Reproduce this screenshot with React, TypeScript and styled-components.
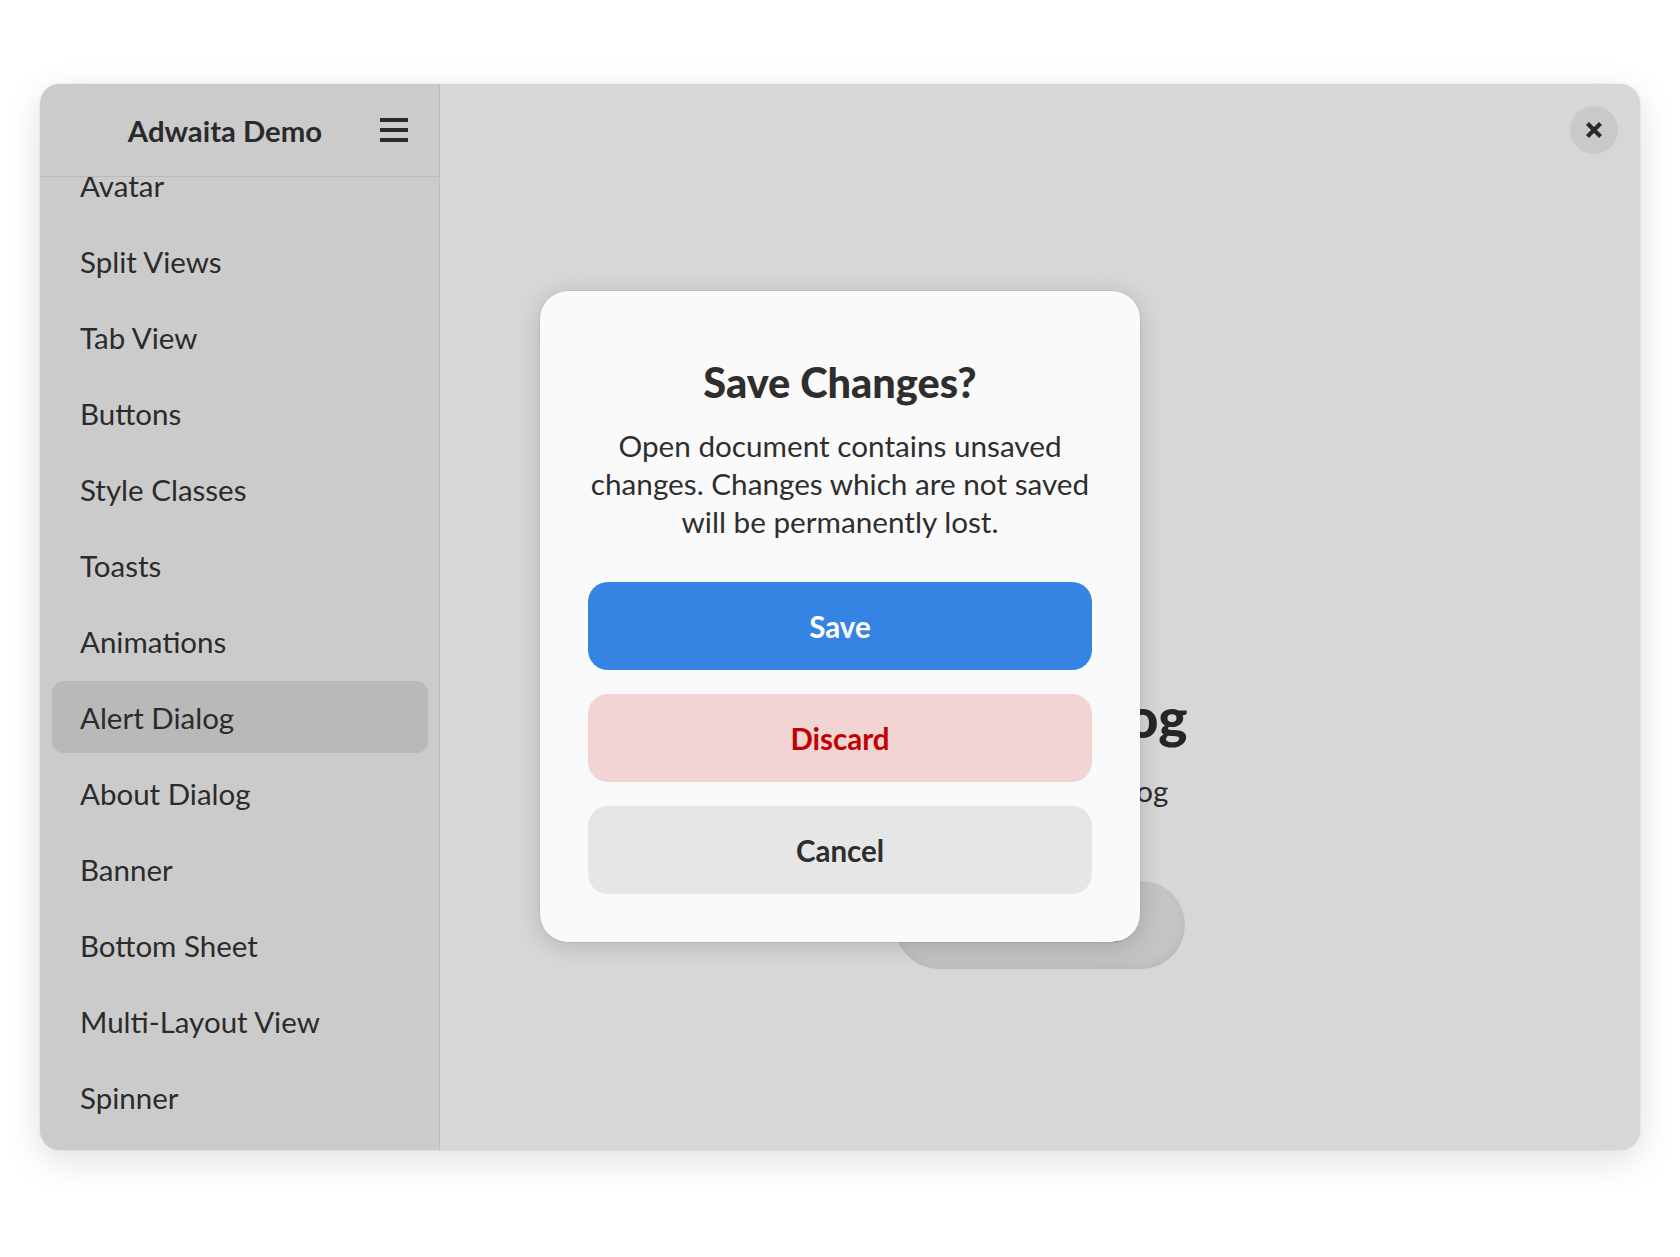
import React, { useLayoutEffect, useRef } from "react";
import styled, { createGlobalStyle } from "styled-components";

const Global = createGlobalStyle`
  html, body { margin: 0; padding: 0; background: #ffffff; }
  body { font-family: Lato, "Noto Sans", sans-serif; color: #2b2b2b; }
  * { box-sizing: border-box; }
`;

const Stage = styled.div`
  width: 1680px;
  height: 1257px;
  padding: 84px 40px 107px 40px;
`;

const Window = styled.div`
  position: relative;
  width: 1600px;
  height: 1066px;
  border-radius: 20px;
  overflow: hidden;
  display: flex;
  background: #d7d7d7;
  box-shadow: 0 10px 36px rgba(0, 0, 0, 0.13), 0 0 0 1px rgba(0, 0, 0, 0.04);
`;

const Sidebar = styled.aside`
  width: 400px;
  flex: none;
  display: flex;
  flex-direction: column;
  background: #cbcbcb;
  border-right: 1px solid #bdbdbd;
`;

const SideHeader = styled.header`
  height: 93px;
  flex: none;
  display: flex;
  align-items: center;
  padding: 0 21px 0 40px;
  border-bottom: 1px solid #bababa;
`;

const HeaderTitle = styled.h1`
  flex: 1;
  margin: 0;
  text-align: center;
  font-size: 29.3px;
  font-weight: 700;
  color: #2a2a2a;
`;

const MenuButton = styled.div`
  width: 48px;
  height: 48px;
  display: flex;
  flex-direction: column;
  align-items: center;
  justify-content: center;
  gap: 6px;
`;

const MenuBar = styled.span`
  display: block;
  width: 28px;
  height: 4px;
  background: #2a2a2a;
`;

const ListScroller = styled.div`
  flex: 1;
  overflow: hidden;
`;

const List = styled.nav`
  display: flex;
  flex-direction: column;
  gap: 4px;
  padding: 12px 11px 60px 12px;
`;

const Row = styled.div<{ $selected?: boolean }>`
  height: 72px;
  flex: none;
  display: flex;
  align-items: center;
  padding-left: 28px;
  border-radius: 12px;
  font-size: 29.5px;
  color: #2b2b2b;
  background: ${(p) => (p.$selected ? "#b9b9b9" : "transparent")};
`;

const Main = styled.main`
  flex: 1;
  display: flex;
  flex-direction: column;
`;

const MainHeader = styled.header`
  height: 92px;
  flex: none;
  display: flex;
  align-items: center;
  justify-content: flex-end;
  padding: 0 22px;
`;

const CloseButton = styled.div`
  width: 48px;
  height: 48px;
  border-radius: 50%;
  background: #c9c9c9;
  display: flex;
  align-items: center;
  justify-content: center;
`;

const StatusPage = styled.section`
  display: flex;
  flex-direction: column;
  align-items: center;
  padding-top: 343px;
`;

const StatusIcon = styled.div`
  width: 128px;
  height: 128px;
  margin-bottom: 36px;
  display: flex;
  align-items: center;
  justify-content: center;
`;

const StatusTitle = styled.h2`
  margin: 0;
  height: 68px;
  line-height: 68px;
  font-size: 55px;
  font-weight: 900;
  color: #262626;
`;

const StatusDesc = styled.p`
  margin: 21px 0 0;
  line-height: 38px;
  font-size: 29.5px;
  color: #2b2b2b;
`;

const PillButton = styled.div`
  margin-top: 71px;
  width: 290px;
  height: 88px;
  border-radius: 44px;
  background: #c4c4c4;
  box-shadow: inset 0 -4px 10px rgba(0, 0, 0, 0.05);
  display: flex;
  align-items: center;
  justify-content: center;
  font-size: 29.5px;
  font-weight: 700;
  color: #2b2b2b;
`;

const Dialog = styled.div`
  position: absolute;
  left: 500px;
  top: 207px;
  width: 600px;
  height: 651px;
  border-radius: 28px;
  background: #fafafa;
  box-shadow: 0 4px 24px rgba(0, 0, 0, 0.16), 0 0 0 1px rgba(0, 0, 0, 0.05);
  display: flex;
  flex-direction: column;
  align-items: stretch;
  padding: 66px 48px 48px;
`;

const DialogTitle = styled.h3`
  margin: 0;
  text-align: center;
  font-size: 41.5px;
  line-height: 50px;
  font-weight: 900;
  color: #2e2e2e;
`;

const DialogBody = styled.p`
  margin: 20px 0 0;
  text-align: center;
  font-size: 29.7px;
  line-height: 38px;
  color: #2e2e2e;
`;

const Buttons = styled.div`
  margin-top: 41px;
  display: flex;
  flex-direction: column;
  gap: 24px;
`;

const ActionButton = styled.div<{ $kind: "suggested" | "destructive" | "plain" }>`
  height: 88px;
  border-radius: 20px;
  display: flex;
  align-items: center;
  justify-content: center;
  font-size: 29.5px;
  font-weight: 700;
  background: ${(p) =>
    p.$kind === "suggested" ? "#3584e4" : p.$kind === "destructive" ? "#f2d4d5" : "#e6e6e6"};
  color: ${(p) =>
    p.$kind === "suggested" ? "#ffffff" : p.$kind === "destructive" ? "#c30000" : "#2e2e2e"};
`;

const items = [
  "Avatar",
  "Split Views",
  "Tab View",
  "Buttons",
  "Style Classes",
  "Toasts",
  "Animations",
  "Alert Dialog",
  "About Dialog",
  "Banner",
  "Bottom Sheet",
  "Multi-Layout View",
  "Spinner",
];

export default function App() {
  const scrollRef = useRef<HTMLDivElement>(null);
  useLayoutEffect(() => {
    if (scrollRef.current) scrollRef.current.scrollTop = 40;
  }, []);

  return (
    <Stage>
      <Global />
      <Window>
        <Sidebar>
          <SideHeader>
            <HeaderTitle>Adwaita Demo</HeaderTitle>
            <MenuButton>
              <MenuBar />
              <MenuBar />
              <MenuBar />
            </MenuButton>
          </SideHeader>
          <ListScroller ref={scrollRef}>
            <List>
              {items.map((t) => (
                <Row key={t} $selected={t === "Alert Dialog"}>
                  {t}
                </Row>
              ))}
            </List>
          </ListScroller>
        </Sidebar>
        <Main>
          <MainHeader>
            <CloseButton>
              <svg width="18" height="18" viewBox="0 0 18 18">
                <path d="M2.5 2.5 L15.5 15.5 M15.5 2.5 L2.5 15.5" stroke="#2a2a2a" strokeWidth="4.2" strokeLinecap="butt" />
              </svg>
            </CloseButton>
          </MainHeader>
          <StatusPage>
            <StatusIcon>
              <svg width="128" height="128" viewBox="0 0 16 16">
                <rect x="1" y="3" width="14" height="10" rx="2" fill="none" stroke="#2b2b2b" strokeWidth="1" />
              </svg>
            </StatusIcon>
            <StatusTitle>Alert Dialog</StatusTitle>
            <StatusDesc>A modal alert dialog</StatusDesc>
            <PillButton>Show Dialog</PillButton>
          </StatusPage>
        </Main>
        <Dialog>
          <DialogTitle>Save Changes?</DialogTitle>
          <DialogBody>
            Open document contains unsaved changes. Changes which are not saved will be permanently lost.
          </DialogBody>
          <Buttons>
            <ActionButton $kind="suggested">Save</ActionButton>
            <ActionButton $kind="destructive">Discard</ActionButton>
            <ActionButton $kind="plain">Cancel</ActionButton>
          </Buttons>
        </Dialog>
      </Window>
    </Stage>
  );
}
